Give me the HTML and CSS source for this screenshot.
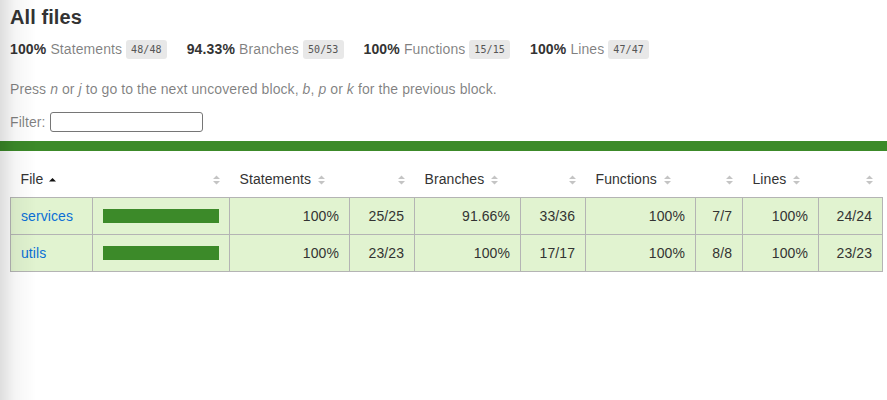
FILE: index.html
```html
<!DOCTYPE html>
<html>
<head>
<meta charset="utf-8">
<title>Code coverage report for All files</title>
<link rel="stylesheet" href="styles.css">
</head>
<body>
<div class="wrapper">
  <div class="pad1 top">
    <h1>All files</h1>
    <div class="stats">
      <div class="stat"><span class="strong">100% </span><span class="quiet">Statements</span> <span class="fraction">48/48</span></div>
      <div class="stat"><span class="strong">94.33% </span><span class="quiet">Branches</span> <span class="fraction">50/53</span></div>
      <div class="stat"><span class="strong">100% </span><span class="quiet">Functions</span> <span class="fraction">15/15</span></div>
      <div class="stat"><span class="strong">100% </span><span class="quiet">Lines</span> <span class="fraction">47/47</span></div>
    </div>
    <p class="quiet help">Press <em>n</em> or <em>j</em> to go to the next uncovered block, <em>b</em>, <em>p</em> or <em>k</em> for the previous block.</p>
    <div class="quiet filter">Filter: <input class="search" type="search" id="fileSearch"></div>
  </div>
  <div class="status-line high"></div>
  <div class="pad1 table-pad">
    <table class="coverage-summary">
      <colgroup>
        <col class="c-file"><col class="c-pic"><col class="c-spct"><col class="c-sabs"><col class="c-bpct"><col class="c-babs"><col class="c-fpct"><col class="c-fabs"><col class="c-lpct"><col class="c-labs">
      </colgroup>
      <thead>
        <tr>
          <th class="file sorted">File<span class="sorter asc"><svg width="7" height="10" viewBox="0 0 7 10"><path d="M0 6.5 L3.5 3 L7 6.5 Z" fill="#111"/></svg></span></th>
          <th class="pic"><span class="sorter"><svg width="7" height="10" viewBox="0 0 7 10"><path d="M0 4 L3.5 0.5 L7 4 Z M0 6 L3.5 9.5 L7 6 Z" fill="#c4c4c4"/></svg></span></th>
          <th class="pct">Statements<span class="sorter"><svg width="7" height="10" viewBox="0 0 7 10"><path d="M0 4 L3.5 0.5 L7 4 Z M0 6 L3.5 9.5 L7 6 Z" fill="#c4c4c4"/></svg></span></th>
          <th class="abs"><span class="sorter"><svg width="7" height="10" viewBox="0 0 7 10"><path d="M0 4 L3.5 0.5 L7 4 Z M0 6 L3.5 9.5 L7 6 Z" fill="#c4c4c4"/></svg></span></th>
          <th class="pct">Branches<span class="sorter"><svg width="7" height="10" viewBox="0 0 7 10"><path d="M0 4 L3.5 0.5 L7 4 Z M0 6 L3.5 9.5 L7 6 Z" fill="#c4c4c4"/></svg></span></th>
          <th class="abs"><span class="sorter"><svg width="7" height="10" viewBox="0 0 7 10"><path d="M0 4 L3.5 0.5 L7 4 Z M0 6 L3.5 9.5 L7 6 Z" fill="#c4c4c4"/></svg></span></th>
          <th class="pct">Functions<span class="sorter"><svg width="7" height="10" viewBox="0 0 7 10"><path d="M0 4 L3.5 0.5 L7 4 Z M0 6 L3.5 9.5 L7 6 Z" fill="#c4c4c4"/></svg></span></th>
          <th class="abs"><span class="sorter"><svg width="7" height="10" viewBox="0 0 7 10"><path d="M0 4 L3.5 0.5 L7 4 Z M0 6 L3.5 9.5 L7 6 Z" fill="#c4c4c4"/></svg></span></th>
          <th class="pct">Lines<span class="sorter"><svg width="7" height="10" viewBox="0 0 7 10"><path d="M0 4 L3.5 0.5 L7 4 Z M0 6 L3.5 9.5 L7 6 Z" fill="#c4c4c4"/></svg></span></th>
          <th class="abs"><span class="sorter"><svg width="7" height="10" viewBox="0 0 7 10"><path d="M0 4 L3.5 0.5 L7 4 Z M0 6 L3.5 9.5 L7 6 Z" fill="#c4c4c4"/></svg></span></th>
        </tr>
      </thead>
      <tbody>
        <tr class="high">
          <td class="file"><a href="#">services</a></td>
          <td class="pic"><div class="chart"><div class="cover-fill cover-full" style="width: 100%"></div></div></td>
          <td class="pct">100%</td>
          <td class="abs">25/25</td>
          <td class="pct">91.66%</td>
          <td class="abs">33/36</td>
          <td class="pct">100%</td>
          <td class="abs">7/7</td>
          <td class="pct">100%</td>
          <td class="abs">24/24</td>
        </tr>
        <tr class="high">
          <td class="file"><a href="#">utils</a></td>
          <td class="pic"><div class="chart"><div class="cover-fill cover-full" style="width: 100%"></div></div></td>
          <td class="pct">100%</td>
          <td class="abs">23/23</td>
          <td class="pct">100%</td>
          <td class="abs">17/17</td>
          <td class="pct">100%</td>
          <td class="abs">8/8</td>
          <td class="pct">100%</td>
          <td class="abs">23/23</td>
        </tr>
      </tbody>
    </table>
  </div>
</div>
<div class="edge-shade"></div>
</body>
</html>
```

FILE: styles.css
```css
*, *:after, *:before { box-sizing: border-box; }
html, body { margin: 0; padding: 0; height: 100%; }
body {
  font-family: "Liberation Sans", Arial, Helvetica, sans-serif;
  font-size: 14px;
  color: #333;
  background: #fff;
  letter-spacing: 0.08px;
}
a { color: #0a6fd6; text-decoration: none; }
h1 { font-size: 20px; margin: 0; line-height: 23px; }
.pad1 { padding: 10px; }
.top { padding-top: 6px; padding-bottom: 0; }
.strong { font-weight: bold; letter-spacing: 0.15px; }
.quiet { color: rgba(0, 0, 0, 0.5); }
.stats { display: flex; padding: 10px 0 7px; }
.stat { padding-right: 20px; line-height: 20px; }
.fraction {
  font-family: "DejaVu Sans Mono", "Liberation Mono", monospace;
  font-size: 10px;
  letter-spacing: 0.1px;
  color: #555;
  background: #e8e8e8;
  padding: 4px 5px;
  border-radius: 3px;
  vertical-align: middle;
}
.help { margin: 14px 0 0; line-height: 17px; }
.filter { margin-top: 13px; height: 22px; display: flex; align-items: center; }
.search {
  width: 153px;
  height: 20px;
  margin: 0 0 0 4px;
  border: 1px solid #767676;
  border-radius: 3px;
  padding: 1px 2px;
  font: inherit;
  background: #fff;
}
.status-line { height: 10px; margin-top: 8px; }
.status-line.high { background: #3c8a29; }
.table-pad { padding: 10px 5px 10px 10px; }
.coverage-summary {
  border-collapse: collapse;
  width: 872px;
  table-layout: fixed;
}
.c-file { width: 82px; }
.c-pic { width: 137px; }
.c-spct { width: 120px; }
.c-sabs { width: 65px; }
.c-bpct { width: 106px; }
.c-babs { width: 65px; }
.c-fpct { width: 110px; }
.c-fabs { width: 47px; }
.c-lpct { width: 76px; }
.c-labs { width: 64px; }
.coverage-summary tr { border-bottom: 1px solid #b4b4b4; }
.coverage-summary thead tr { border-bottom: none; }
.coverage-summary tbody { border: 1px solid #b4b4b4; }
.coverage-summary td, .coverage-summary th { padding: 10px; line-height: 16px; }
.coverage-summary td { border-right: 1px solid #b4b4b4; white-space: nowrap; }
.coverage-summary td:last-child { border-right: none; }
.coverage-summary th { text-align: left; font-weight: normal; white-space: nowrap; }
.coverage-summary th.pic, .coverage-summary th.abs,
.coverage-summary td.pct, .coverage-summary td.abs { text-align: right; }
.sorter {
  display: inline-block;
  width: 7px;
  height: 10px;
  margin-left: 7px;
  vertical-align: -1px;
}
.sorter svg { display: block; }
.sorter.asc { margin-left: 6px; }
tr.high { background: #e1f3d0; }
.chart { line-height: 0; border: 1px solid #3c8a29; }
.cover-fill { display: block; height: 12px; background: #3c8a29; }
.edge-shade {
  position: fixed;
  left: 0;
  top: 0;
  bottom: 0;
  width: 40px;
  pointer-events: none;
  background: linear-gradient(to right, rgba(0, 0, 0, 0.13), rgba(0, 0, 0, 0.04) 15px, rgba(0, 0, 0, 0) 36px);
}
```
